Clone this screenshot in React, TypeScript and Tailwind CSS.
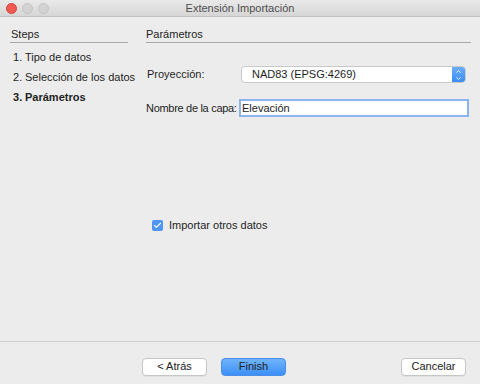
import { ChevronUp, ChevronDown, Check } from 'lucide-react'

const font = { fontFamily: '"Liberation Sans", Arial, sans-serif' }

function TrafficLights() {
  return (
    <div className="absolute left-[6px] top-[3px] flex gap-[5px]">
      <div className="w-[11px] h-[11px] rounded-full bg-[#ee5a52] border border-[#d9443d]" />
      <div className="w-[11px] h-[11px] rounded-full bg-[#d3d3d3] border border-[#c4c4c4]" />
      <div className="w-[11px] h-[11px] rounded-full bg-[#d3d3d3] border border-[#c4c4c4]" />
    </div>
  )
}

function MacButton({ label, primary }: { label: string; primary?: boolean }) {
  return (
    <button
      className={`h-[18px] w-[65px] rounded-[4px] text-[11px] leading-none text-[#222] ${
        primary
          ? 'bg-gradient-to-b from-[#6fb4fc] to-[#3b8ff7] border border-[#4a8ee6]'
          : 'bg-white border border-[#c6c6c6] shadow-[0_1px_0_rgba(0,0,0,0.05)]'
      }`}
    >
      {label}
    </button>
  )
}

export default function App() {
  const steps = ['Tipo de datos', 'Selección de los datos', 'Parámetros']

  return (
    <div className="w-[480px] h-[384px] bg-[#ececec] flex flex-col text-[#1e1e1e]" style={font}>
      {/* Title bar */}
      <div className="relative h-[17px] shrink-0 bg-gradient-to-b from-[#e9e9e9] to-[#d6d6d6] border-b border-[#c2c2c2] flex items-center justify-center">
        <TrafficLights />
        <span className="text-[11px] text-[#4d4d4d]">Extensión Importación</span>
      </div>

      {/* Content */}
      <div className="flex-1 flex pt-[9px]">
        {/* Steps */}
        <div className="ml-[10px] w-[118px] shrink-0">
          <div className="text-[11px] leading-[16px] border-b border-[#a8a8a8] pl-[1px]">Steps</div>
          <div className="mt-[4px] flex flex-col">
            {steps.map((s, i) => (
              <div
                key={s}
                className={`h-[20px] flex items-center pl-[3px] text-[11px] whitespace-nowrap ${
                  i === 2 ? 'font-bold' : ''
                }`}
              >
                <span className="w-[12px] shrink-0">{i + 1}.</span>
                <span>{s}</span>
              </div>
            ))}
          </div>
        </div>

        {/* Parameters */}
        <div className="ml-[18px] w-[325px] flex flex-col">
          <div className="text-[11px] leading-[16px] border-b border-[#a8a8a8]">Parámetros</div>

          <div className="mt-[23px] flex items-center">
            <span className="w-[95px] shrink-0 pl-[1px] text-[11px] whitespace-nowrap">Proyección:</span>
            <div className="w-[225px] h-[17px] flex bg-white border border-[#c9c9c9] rounded-[4px] overflow-hidden">
              <span className="flex-1 pl-[10px] text-[11px] leading-[15px]">NAD83 (EPSG:4269)</span>
              <div className="w-[13px] bg-gradient-to-b from-[#6aaefa] to-[#3a8cf5] flex flex-col items-center justify-center text-white">
                <ChevronUp size={7} strokeWidth={3} />
                <ChevronDown size={7} strokeWidth={3} />
              </div>
            </div>
          </div>

          <div className="mt-[16px] flex items-center">
            <span className="flex-1 text-[11px] whitespace-nowrap tracking-[-0.3px]">Nombre de la capa:</span>
            <div className="w-[230px] h-[18px] mr-[2px] bg-white border-2 border-[#8cb5ef] flex items-center pl-[1px] text-[11px]">
              Elevación
            </div>
          </div>

          <div className="mt-[100px] ml-[6px] flex items-center gap-[6px]">
            <div className="w-[11px] h-[11px] rounded-[2px] bg-[#4e95f5] flex items-center justify-center text-white">
              <Check size={9} strokeWidth={3} />
            </div>
            <span className="text-[11px]">Importar otros datos</span>
          </div>
        </div>
      </div>

      {/* Footer */}
      <div className="h-[43px] shrink-0 border-t border-[#cdcdcd] flex items-start pt-[11px]">
        <div className="ml-[142px]">
          <MacButton label="< Atrás" />
        </div>
        <div className="ml-[14px]">
          <MacButton label="Finish" primary />
        </div>
        <div className="ml-[115px]">
          <MacButton label="Cancelar" />
        </div>
      </div>
    </div>
  )
}
